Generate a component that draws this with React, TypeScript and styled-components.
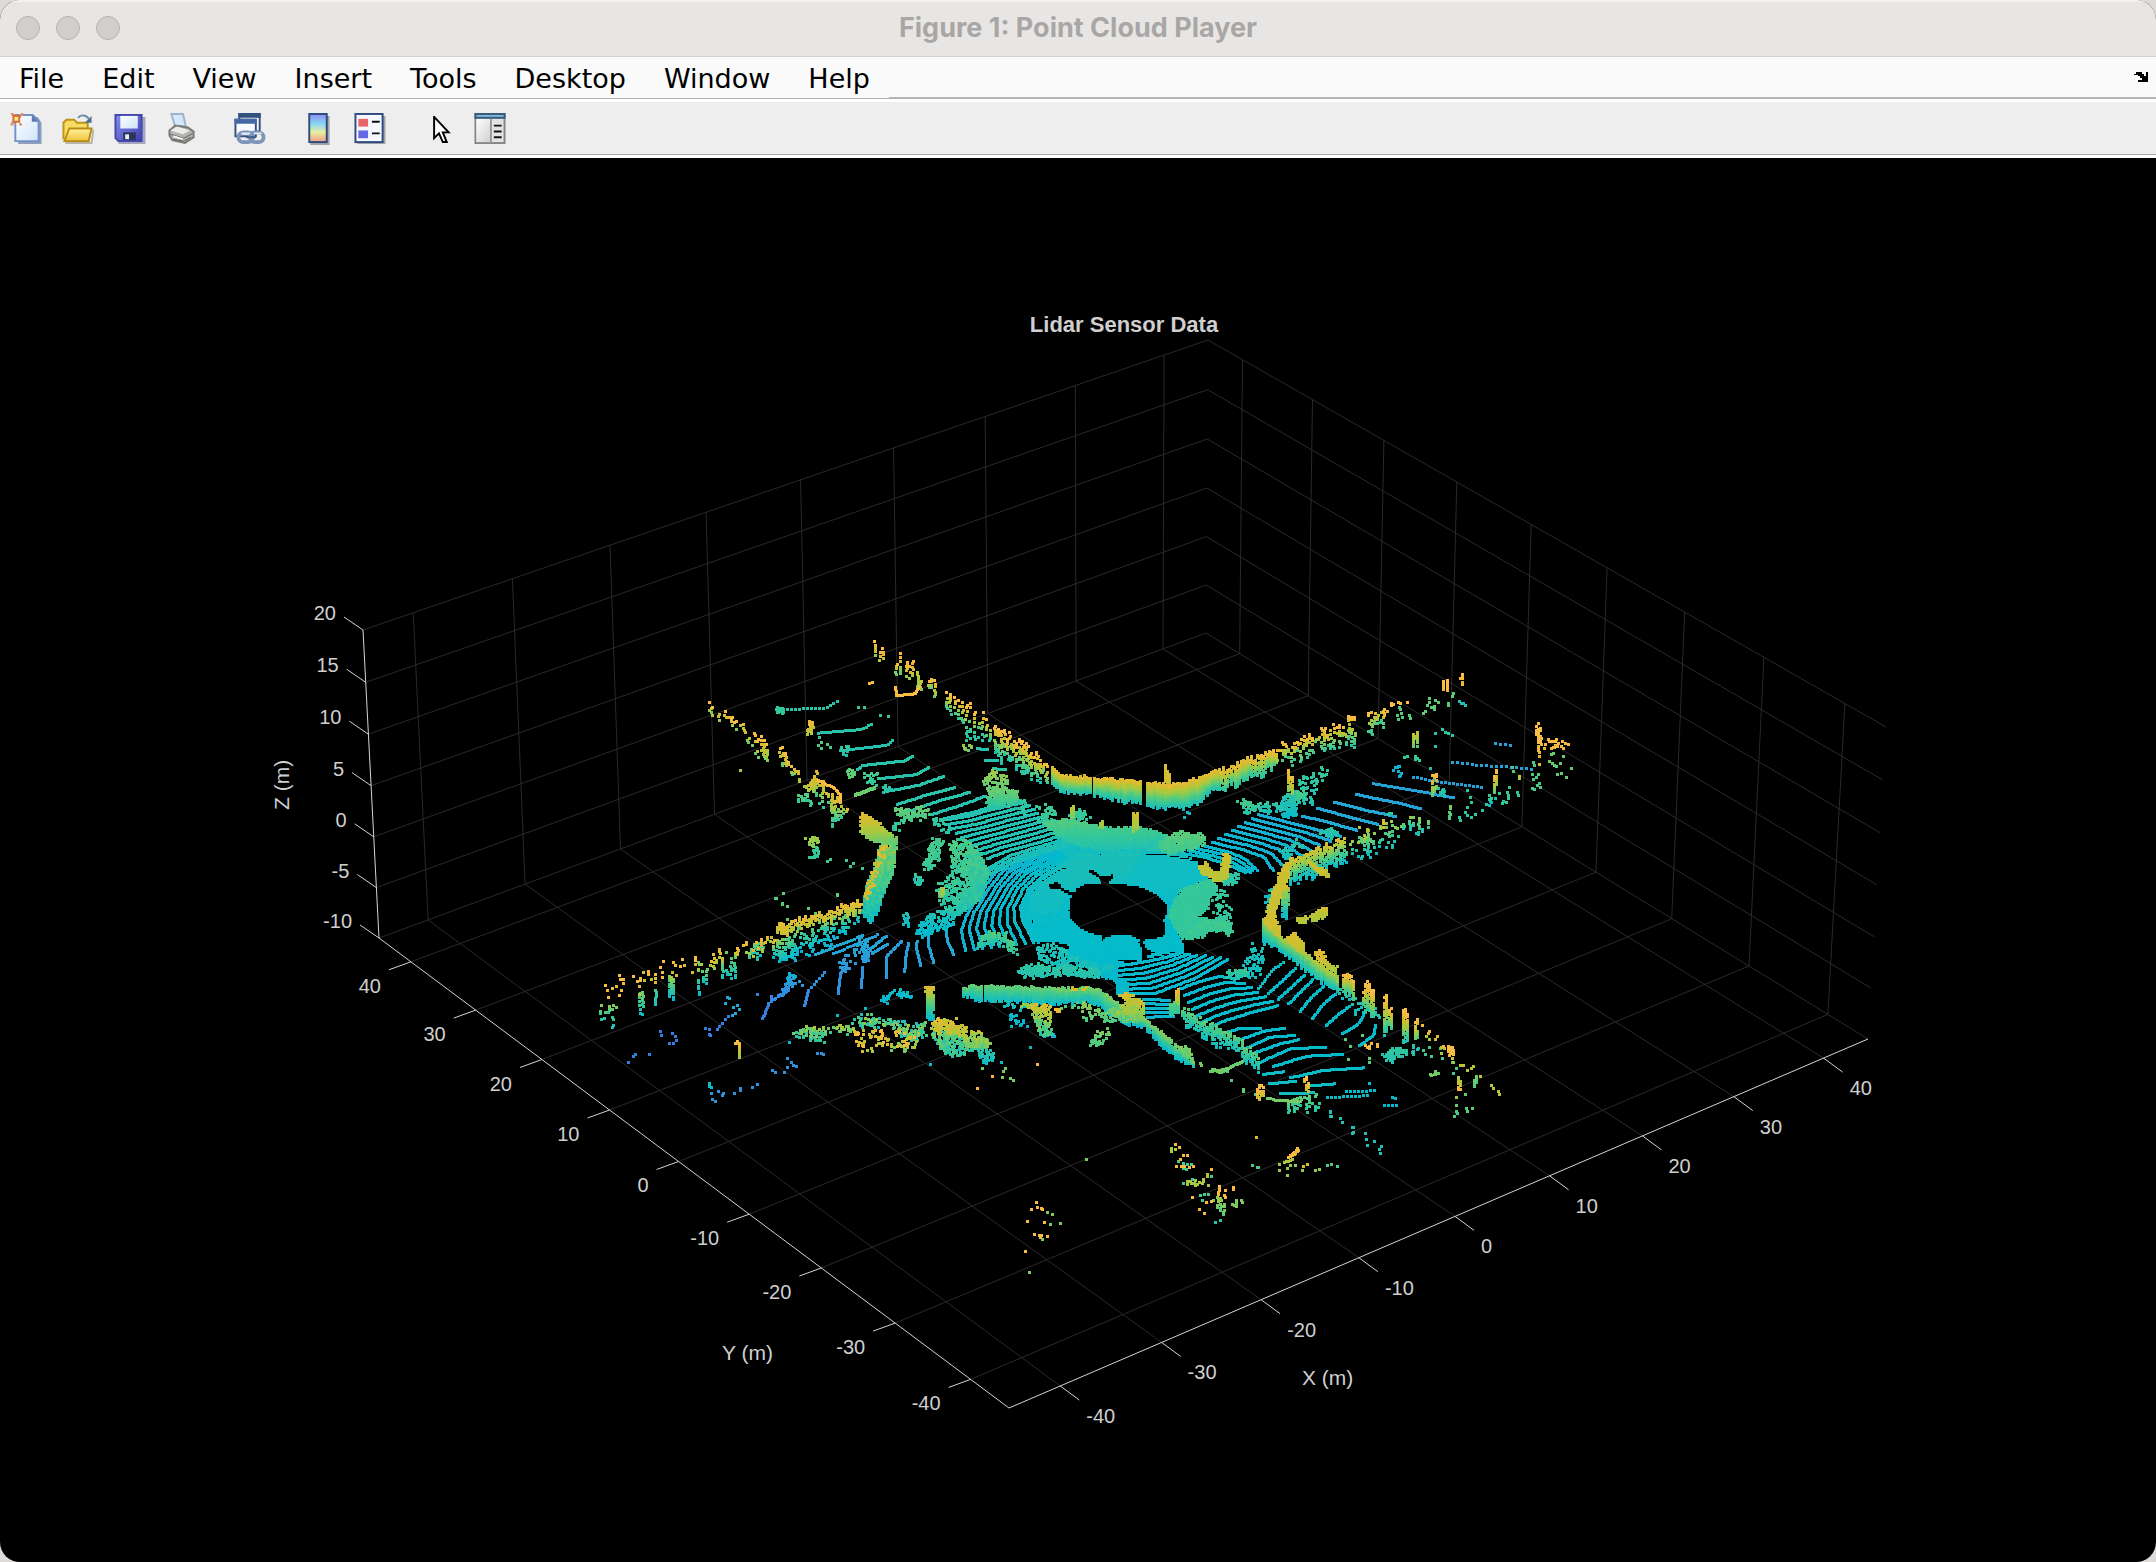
import React from 'react';
import styled, { createGlobalStyle } from 'styled-components';

/* ---------- page shell ---------- */

const GlobalStyle = createGlobalStyle`
  * { box-sizing: border-box; }
  body { margin: 0; background: #dcdbd9; }
`;

const Window = styled.main`
  display: flex;
  flex-direction: column;
  min-height: 100vh;
  overflow: hidden;
  border-radius: 20px;
  background: #000;
`;

const TitleBar = styled.header`
  display: grid;
  grid-template-columns: 1fr auto 1fr;
  align-items: center;
  height: 57px;
  padding: 0 16px 2px;
  background: #e8e6e4;
  border-top: 2px solid #f4f3f2;
  border-bottom: 1px solid #d0d0d0;
`;

const Lights = styled.div`
  display: flex;
  gap: 16px;
`;

const Light = styled.button`
  width: 24px;
  height: 24px;
  padding: 0;
  border: 1px solid #b4b3b1;
  border-radius: 50%;
  background: #d0cfcd;
`;

const WindowTitle = styled.h1`
  margin: 0;
  font: 700 27px/32px Inter, 'Liberation Sans', sans-serif;
  color: #a9a7a6;
`;

const MenuRow = styled.nav`
  display: flex;
  align-items: stretch;
  height: 45px;
  background: #fafafa;
  border-bottom: 3px solid #fff;
`;

const MenuList = styled.ul`
  display: flex;
  margin: 0;
  padding: 0;
  list-style: none;
  border-bottom: 1px solid #b2b2b2;
`;

const MenuButton = styled.button`
  height: 41px;
  padding: 2px 19px 0;
  border: 0;
  background: none;
  font: 400 27px/38px 'DejaVu Sans', sans-serif;
  color: #000;
`;

const MenuFill = styled.div`
  flex: 1;
  display: flex;
  justify-content: flex-end;
  align-items: center;
  padding-right: 8px;
  border-bottom: 2px solid #b4b4b4;
`;

const DockButton = styled.button`
  display: flex;
  padding: 0;
  border: 0;
  background: none;
`;

const Toolbar = styled.div`
  display: flex;
  align-items: center;
  gap: 36px;
  height: 56px;
  padding: 0 10px;
  background: #eee;
  border-bottom: 3px solid #fff;
  box-shadow: inset 0 -1px 0 #a8a8a8;
`;

const ToolGroup = styled.div`
  display: flex;
  gap: 20px;
`;

const ToolButton = styled.button`
  display: flex;
  width: 32px;
  height: 32px;
  padding: 0;
  border: 0;
  background: none;
`;

const Plot = styled.svg`
  display: block;
  width: 100%;
  height: auto;
`;

const TickLabel = styled.text`
  font: 400 20px 'Liberation Sans', Arial, sans-serif;
  fill: #cfcfcf;
`;

const AxisLabel = styled.text`
  font: 400 21px 'Liberation Sans', Arial, sans-serif;
  fill: #cfcfcf;
`;

const PlotTitle = styled.text`
  font: 700 22px 'Liberation Sans', Arial, sans-serif;
  fill: #cfcfcf;
`;

/* ---------- toolbar icons ---------- */

const icons: Record<string, React.ReactNode> = {
  'New Figure': (
    <>
      <path d="M8 4h20l4 6v22H8z" fill="#8f9fbb" />
      <path d="M5 2h18l6 6v21H5z" fill="url(#paper)" stroke="#6f93c8" strokeWidth="2" />
      <path d="M22 2v7h7z" fill="#5f78ad" />
      <path d="M0 0h2v2h2v2h6V2h2V0M0 12h2v-2h2M12 12h-2v-2" stroke="#e58a5c" strokeWidth="2" fill="none" />
      <rect x="2" y="2" width="8" height="8" fill="#d86e36" />
      <rect x="4" y="4" width="4" height="4" fill="#ffe680" />
    </>
  ),
  'Open File': (
    <>
      <path d="M3 31h27l2-14" stroke="#b9b5aa" strokeWidth="2" fill="none" />
      <path d="M1 27V10l3-3h8l3 3h11v6" fill="#f7dd65" stroke="#bd9414" strokeWidth="2" />
      <path d="M16 5c3-4 9-3 11 1" stroke="#6e8ba8" strokeWidth="2" fill="none" />
      <path d="M30 3v7h-7z" fill="#4e7094" />
      <path d="M2 29l5-13h23l-3 13z" fill="url(#folder)" stroke="#b98e10" strokeWidth="2" />
    </>
  ),
  'Save Figure': (
    <>
      <path d="M4 4h28v28H4z" fill="#a5a8bd" />
      <path d="M1 2h27v27H4l-3-3z" fill="url(#disk)" stroke="#4247ac" strokeWidth="2" />
      <rect x="6" y="3" width="18" height="13" fill="url(#paper)" />
      <rect x="9" y="20" width="13" height="8" fill="#2c3457" />
      <rect x="11" y="22" width="4" height="5" fill="#e7ebf5" />
    </>
  ),
  'Print Figure': (
    <>
      <path d="M5 1h12l3 13H9z" fill="#d5e7fb" stroke="#9eb4cd" strokeWidth="2" />
      <path d="M3 18l6-5 13 2 6 4v6l-9 6-13-3-3-5z" fill="#b4b4b2" stroke="#7a7a78" strokeWidth="2" />
      <path d="M4 18l7-4 13 4-7 4z" fill="#ececea" />
      <path d="M4 22l14 4 9-5M7 27l11 2 7-4" stroke="#5c5c5a" strokeWidth="1" fill="none" />
      <path d="M7 24l10 3" stroke="#f0f0ee" strokeWidth="2" />
    </>
  ),
  'Link Plot': (
    <>
      <path d="M5 1h21v18H5z" fill="#f2f6fd" stroke="#34507f" strokeWidth="2" />
      <path d="M4 0h23v5H4z" fill="#34507f" />
      <path d="M1 7h21v17H1z" fill="#f7faff" stroke="#34507f" strokeWidth="2" />
      <path d="M0 6h23v5H0z" fill="#4468a5" />
      <g fill="none">
        <rect x="4" y="20" width="15" height="10" rx="5" stroke="#7c95b8" strokeWidth="4" />
        <rect x="16" y="20" width="14" height="10" rx="5" stroke="#7c95b8" strokeWidth="4" />
        <path d="M7 21h9M20 21h8" stroke="#dfe9f6" strokeWidth="2" />
        <path d="M12 25h10" stroke="#3e5b8b" strokeWidth="2" />
      </g>
    </>
  ),
  'Insert Colorbar': (
    <>
      <rect x="8" y="3" width="20" height="30" fill="#a4a6ab" />
      <rect x="7" y="1" width="18" height="29" fill="url(#bar)" stroke="#2f4a7c" strokeWidth="2" />
    </>
  ),
  'Insert Legend': (
    <>
      <rect x="3" y="3" width="29" height="29" fill="#a4a6ab" />
      <rect x="1" y="1" width="28" height="29" fill="#f5f8ff" stroke="#2f4a7c" strokeWidth="2" />
      <rect x="4" y="6" width="10" height="8" fill="#e86466" />
      <rect x="4" y="18" width="10" height="8" fill="#6568e6" />
      <path d="M18 9h8M18 21h8" stroke="#111" strokeWidth="2" />
    </>
  ),
  'Edit Plot': (
    <path d="M12 3v23l5-5 4 9h4l-4-10h6L12 4" fill="#fff" stroke="#000" strokeWidth="2" />
  ),
  'Open Property Inspector': (
    <>
      <rect x="1" y="1" width="30" height="30" fill="#e2e2e2" stroke="#858585" strokeWidth="2" />
      <rect x="2" y="6" width="15" height="24" fill="url(#pane)" />
      <rect x="0" y="0" width="32" height="6" fill="#365a7c" />
      <rect x="2" y="2" width="28" height="2" fill="#7fb6d8" />
      <path d="M17 6v24" stroke="#9a9a9a" strokeWidth="2" />
      <path d="M20 13h8M20 19h8M20 25h8" stroke="#111" strokeWidth="2" />
    </>
  ),
};

const toolGroups = [
  ['New Figure', 'Open File', 'Save Figure', 'Print Figure'],
  ['Link Plot'],
  ['Insert Colorbar', 'Insert Legend'],
  ['Edit Plot', 'Open Property Inspector'],
];

const IconDefs = () => (
  <defs>
    <linearGradient id="paper" x1="0" y1="0" x2="1" y2="1">
      <stop offset="0" stopColor="#fff" />
      <stop offset="1" stopColor="#cfe3fa" />
    </linearGradient>
    <linearGradient id="folder" x1="0" y1="0" x2="0" y2="1">
      <stop offset="0" stopColor="#fff2a0" />
      <stop offset="1" stopColor="#f0c23a" />
    </linearGradient>
    <linearGradient id="disk" x1="0" y1="0" x2="1" y2="1">
      <stop offset="0" stopColor="#8a8ff0" />
      <stop offset="1" stopColor="#3c3fae" />
    </linearGradient>
    <linearGradient id="bar" x1="0" y1="0" x2="0" y2="1">
      <stop offset="0" stopColor="#8e8cf0" />
      <stop offset="0.35" stopColor="#86d8f4" />
      <stop offset="0.65" stopColor="#e9f0a0" />
      <stop offset="1" stopColor="#f29a88" />
    </linearGradient>
    <linearGradient id="pane" x1="0" y1="0" x2="1" y2="1">
      <stop offset="0" stopColor="#fff" />
      <stop offset="1" stopColor="#cfcfcf" />
    </linearGradient>
  </defs>
);

/* ---------- axes geometry ---------- */

type Pt = [number, number];

/** Projective map from the unit square to a quad given as (0,0) (1,0) (1,1) (0,1). */
const quadMap = ([a, b, c, d]: Pt[]) => {
  const sx = a[0] - b[0] + c[0] - d[0];
  const sy = a[1] - b[1] + c[1] - d[1];
  const dx1 = b[0] - c[0], dx2 = d[0] - c[0];
  const dy1 = b[1] - c[1], dy2 = d[1] - c[1];
  const det = dx1 * dy2 - dx2 * dy1;
  const g = (sx * dy2 - dx2 * sy) / det;
  const h = (dx1 * sy - sx * dy1) / det;
  return (u: number, v: number): Pt => {
    const w = g * u + h * v + 1;
    return [
      ((b[0] - a[0] + g * b[0]) * u + (d[0] - a[0] + h * d[0]) * v + a[0]) / w,
      ((b[1] - a[1] + g * b[1]) * u + (d[1] - a[1] + h * d[1]) * v + a[1]) / w,
    ];
  };
};

const front: Pt = [1009, 1408];
const right: Pt = [1868, 1039];
const back: Pt = [1206, 633];
const left: Pt = [379, 938];
const leftTop: Pt = [363, 630];
const backTop: Pt = [1208, 340];
const rightTop: Pt = [1886, 727];

const floor = quadMap([front, right, back, left]);
const leftWall = quadMap([left, back, backTop, leftTop]);
const rightWall = quadMap([right, back, backTop, rightTop]);

const ticksXY = [-40, -30, -20, -10, 0, 10, 20, 30, 40];
const ticksZ = [-10, -5, 0, 5, 10, 15, 20];
const uXY = (v: number) => (v + 45) / 90;
const uZ = (v: number) => (v + 10) / 30;

const seg = (a: Pt, b: Pt) =>
  `M${a[0].toFixed(1)} ${a[1].toFixed(1)}L${b[0].toFixed(1)} ${b[1].toFixed(1)}`;

const gridPath = [
  ...ticksXY.flatMap((v) => {
    const u = uXY(v);
    return [
      seg(floor(u, 0), floor(u, 1)),
      seg(floor(0, u), floor(1, u)),
      seg(leftWall(u, 0), leftWall(u, 1)),
      seg(rightWall(u, 0), rightWall(u, 1)),
    ];
  }),
  ...ticksZ.flatMap((v) => [
    seg(leftWall(0, uZ(v)), leftWall(1, uZ(v))),
    seg(rightWall(0, uZ(v)), rightWall(1, uZ(v))),
  ]),
].join('');

const shift = (p: Pt, dx: number, dy: number): Pt => [p[0] + dx, p[1] + dy];

const axisPath = [
  seg(front, right),
  seg(front, left),
  seg(left, leftTop),
  ...ticksXY.map((v) => seg(floor(uXY(v), 0), shift(floor(uXY(v), 0), 19, 14))),
  ...ticksXY.map((v) => seg(floor(0, uXY(v)), shift(floor(0, uXY(v)), -22, 8))),
  ...ticksZ.map((v) => seg(leftWall(0, uZ(v)), shift(leftWall(0, uZ(v)), -19, -13))),
].join('');

/* ---------- point cloud ---------- */

let seed = 20117;
const rnd = () => {
  seed = (seed * 1664525 + 1013904223) % 4294967296;
  return seed / 4294967296;
};

/** Coarse noise that makes sparse foliage gather in small clumps. */
const clump = (x: number, y: number) => {
  const v = Math.sin(Math.floor(x / 6) * 12.9898 + Math.floor(y / 5) * 78.233) * 43758.5453;
  return v - Math.floor(v);
};

const ramp: [number, number, number, number][] = [
  [0, 62, 108, 222],
  [0.15, 46, 146, 222],
  [0.28, 34, 168, 212],
  [0.37, 2, 186, 205],
  [0.46, 34, 192, 178],
  [0.54, 54, 200, 150],
  [0.64, 104, 204, 112],
  [0.74, 168, 202, 62],
  [0.84, 214, 188, 46],
  [0.93, 248, 186, 62],
  [1, 250, 194, 72],
];

const heightColor = (t: number) => {
  let i = 1;
  while (i < ramp.length - 1 && ramp[i][0] < t) i++;
  const [t0, r0, g0, b0] = ramp[i - 1];
  const [t1, r1, g1, b1] = ramp[i];
  const k = Math.min(1, Math.max(0, (t - t0) / (t1 - t0)));
  const m = (p: number, q: number) => Math.round(p + (q - p) * k);
  return `rgb(${m(r0, r1)},${m(g0, g1)},${m(b0, b1)})`;
};

type Dot = { x: number; y: number; t: number };
let dots: Dot[] = [];

const parse = (s: string): Pt[] => s.split(' ').map((p) => p.split(',').map(Number) as Pt);

const yAt = (line: Pt[], x: number) => {
  for (let i = 1; i < line.length; i++) {
    const [x0, y0] = line[i - 1];
    const [x1, y1] = line[i];
    if (x <= x1) return y0 + ((y1 - y0) * (x - x0)) / (x1 - x0 || 1);
  }
  return line[line.length - 1][1];
};

const inside = (poly: Pt[], x: number, y: number) => {
  let hit = false;
  for (let i = 0, j = poly.length - 1; i < poly.length; j = i++) {
    const [xi, yi] = poly[i];
    const [xj, yj] = poly[j];
    if (yi > y !== yj > y && x < ((xj - xi) * (y - yi)) / (yj - yi) + xi) hit = !hit;
  }
  return hit;
};

/** Each scan patch has its own origin and is measured in thirds of a pixel. */
const patch = (ox: number, oy: number) => {
  const pts = (s: string): Pt[] => parse(s).map(([x, y]) => [ox + x / 3, oy + y / 3]);
  const put = (x: number, y: number, t: number) =>
    dots.push({ x: Math.round(x) - 1, y: Math.round(y) - 1, t });

  const trace = (p: Pt[], t: number, step: number) => {
    let carry = 0;
    for (let i = 1; i < p.length; i++) {
      const [x0, y0] = p[i - 1];
      const [x1, y1] = p[i];
      const len = Math.hypot(x1 - x0, y1 - y0);
      for (; carry < len; carry += step) {
        put(x0 + ((x1 - x0) * carry) / len, y0 + ((y1 - y0) * carry) / len, t + (rnd() - 0.5) * 0.02);
      }
      carry -= len;
    }
  };

  return {
    /** Vertical returns hanging between a top and a bottom edge. */
    wall(top: string, bottom: string, t0: number, t1: number, keep = 1, gap = 2) {
      const a = pts(top);
      const b = pts(bottom);
      const rag = keep < 0.9 ? (gap > 2 ? 10 : 7) : 3;
      for (let x = a[0][0]; x <= a[a.length - 1][0]; x += gap) {
        const y0 = yAt(a, x) + (rnd() - 0.5) * rag;
        const y1 = yAt(b, x) + (rnd() - 0.5) * rag * 1.4;
        for (let y = y0; y <= y1; y += 2) {
          if (rnd() < keep) {
            const f = (y - y0) / Math.max(1, y1 - y0);
            const j = keep < 0.9 && gap > 2 ? (rnd() - 0.5) * 1.6 : 0;
            put(x + j, y, t0 + (t1 - t0) * f + (rnd() - 0.5) * 0.05);
          }
        }
      }
    },
    /** Filled region; below full density it breaks into clumps. */
    fill(outline: string, t0: number, t1: number, keep = 1, noise = 0.04) {
      const p = pts(outline);
      const xs = p.map((q) => q[0]);
      const ys = p.map((q) => q[1]);
      const y0 = Math.min(...ys), y1 = Math.max(...ys);
      for (let y = y0; y <= y1; y += 2) {
        for (let x = Math.min(...xs); x <= Math.max(...xs); x += 2) {
          const e = keep < 1 ? 4 : 2;
          const chance = keep < 0.9 ? keep + (clump(x, y) - 0.5) * 0.7 * keep : keep;
          if (!inside(p, x + (rnd() - 0.5) * e, y + (rnd() - 0.5) * e) || rnd() > chance) continue;
          const f = (y - y0) / (y1 - y0 || 1);
          const j = keep < 0.9 ? (rnd() - 0.5) * 2 : 0;
          put(x + j, y + j, t0 + (t1 - t0) * f + (rnd() - 0.5) * noise);
        }
      }
    },
    line(s: string, t: number, step = 2) {
      trace(pts(s), t, step);
    },
    /** Scan rings interpolated between two guide curves. */
    rings(from: string, to: string, n: number, t0: number, t1 = t0) {
      const a = pts(from);
      const b = pts(to);
      for (let i = 0; i < n; i++) {
        const k = i / (n - 1);
        trace(a.map(([x, y], j) => [x + (b[j][0] - x) * k, y + (b[j][1] - y) * k]), t0 + (t1 - t0) * k, 2);
      }
    },
    at(s: string, t: number) {
      pts(s).forEach(([x, y]) => put(x, y, t));
    },
    clear(outline: string) {
      const p = pts(outline);
      dots = dots.filter((d) => !inside(p, d.x + 1, d.y + 1));
    },
    scratch(s: string) {
      const p = pts(s);
      dots = dots.filter(
        (d) => d.x < p[0][0] || d.x > p[p.length - 1][0] || Math.abs(yAt(p, d.x) - d.y - 1) > 0.9,
      );
    },
  };
};

const w = patch(620, 620);
const s = patch(580, 880);
const c = patch(980, 720);
const e = patch(1180, 660);
const b = patch(960, 1120);

/* ground around the sensor */
c.fill('165,668 130,610 120,560 145,505 185,468 240,430 270,412 240,395 230,345 300,330 460,330 560,370 600,395 640,420 665,445 690,470 600,510 570,580 600,650 612,700 540,708 470,722 410,728 415,790 350,762 330,740 255,712 268,675 210,660', 0.42, 0.36, 1, 0.015);
c.fill('150,520 240,430 300,400 480,390 440,480 280,500 230,560 140,600', 0.44, 0.4, 1, 0.02);
c.fill('185,310 250,298 330,315 400,325 460,320 540,335 575,355 540,392 470,385 380,392 300,380 240,355', 0.6, 0.45);
c.fill('160,262 215,255 235,300 300,262 330,305 260,318 180,312', 0.54, 0.5, 0.55);
c.fill('535,375 560,350 595,333 675,345 678,368 640,385 560,402', 0.62, 0.54, 0.97);
c.fill('565,590 580,545 610,505 690,475 718,505 690,530 685,570 650,590 700,600 745,580 735,600 755,640 715,625 660,645 625,660 605,655', 0.52, 0.52);
c.fill('690,560 700,520 735,500 750,560 748,640 715,610', 0.52, 0.52, 0.35);
c.fill('610,640 680,600 745,605 755,640 700,630 650,660', 0.56, 0.52, 0.75);

/* hollow under the sensor */
c.clear('264,570 270,530 290,500 320,487 370,486 430,490 490,500 530,520 558,550 562,575 552,600 558,640 545,652 480,662 440,642 400,645 375,655 365,662 362,648 330,640 295,622 270,595');
c.clear('285,535 250,518 230,505 205,506 203,492 225,483 243,488 244,500 285,516');
c.clear('362,490 350,472 322,456 324,450 345,450 362,464 378,466 402,456 400,474 384,490');
c.clear('470,662 485,656 500,685 528,698 500,706 500,722 482,716 484,690');
c.scratch('190,462 240,430 300,410 360,400');
c.scratch('485,399 560,404 640,420 700,440');
c.scratch('410,722 500,715 590,692');
c.scratch('150,520 185,480 230,450 260,440');

/* rings on the west side */
w.rings('960,600 1040,588 1120,566 1215,545', '1100,715 1160,692 1250,668 1340,640', 10, 0.46, 0.45);
w.rings('1035,990 1022,930 1040,880 1092,800 1130,750 1230,702 1330,668 1400,645', '1240,965 1206,900 1200,860 1225,805 1265,768 1320,733 1380,710 1440,698', 9, 0.32, 0.4);
w.rings('1108,740 1170,705 1250,680 1340,655', '1108,762 1180,725 1260,698 1360,668', 3, 0.44);
w.rings('1250,860 1252,890 1262,920 1262,920', '1225,830 1220,870 1238,930 1250,950', 2, 0.38);
w.clear('1228,860 1234,858 1238,910 1232,905');
w.clear('1254,862 1257,862 1260,905 1256,900');
w.line('960,597 1060,575 1150,548 1200,540', 0.47);
w.line('930,583 1020,555 1100,525', 0.47);
w.line('865,573 960,540 1050,515', 0.48);
w.line('830,552 930,520 1007,500', 0.48);
w.line('790,515 900,493 973,467', 0.48);
w.line('775,475 890,462 928,440', 0.48);
w.line('712,448 725,435 850,422 880,404', 0.49);
w.line('680,388 800,375 820,357', 0.48, 3);
w.line('595,338 725,327 760,307', 0.49, 3);
w.line('500,267 620,262 660,237', 0.5, 4);
w.line('1070,385 1105,387', 0.48);
w.line('1095,420 1135,420', 0.48);
w.line('1120,445 1160,447', 0.5);
w.line('705,525 765,503', 0.64);
w.line('705,522 765,500', 0.64);

/* north-west arm, facades and shrubs */
w.wall('765,78 800,78', '765,120 800,120', 1, 0.65, 0.4, 4);
w.wall('828,115 842,115', '828,160 842,165', 0.95, 0.6, 0.7, 4);
w.wall('860,130 884,130', '860,185 884,150', 0.98, 0.7, 0.6, 3);
w.line('826,200 828,225 885,220 898,195', 0.95);
w.wall('893,170 908,185', '893,205 908,212', 0.8, 0.66, 0.8, 3);
w.wall('925,178 945,178', '922,215 945,235', 0.98, 0.62, 0.7, 3);
w.at('748,188 757,187', 0.95);
w.at('715,262 733,262 780,285 805,288', 0.55);
w.wall('978,218 1035,245 1085,278 1110,312', '978,270 1035,320 1085,355 1110,355', 0.98, 0.48, 0.5, 4);
w.wall('1125,322 1165,345 1245,398 1285,448', '1125,410 1165,425 1245,480 1288,488', 0.97, 0.44, 0.72, 3);
w.fill('1085,470 1120,450 1165,462 1175,495 1140,500 1110,520', 0.72, 0.6, 0.5);
w.fill('1100,510 1150,500 1195,515 1195,545 1150,560 1100,555', 0.66, 0.5, 0.88);
w.fill('1200,535 1216,535 1218,575 1205,580', 0.52, 0.5, 0.7);
w.fill('1030,350 1090,345 1095,360 1035,356', 0.5, 0.5, 0.6);
w.fill('1025,382 1055,378 1055,390 1030,395', 0.7, 0.64, 0.7);
w.wall('270,240 350,298 410,345 445,385', '280,290 350,335 400,385 445,425', 0.97, 0.62, 0.38, 3);
w.wall('432,378 447,385', '432,412 447,425', 0.84, 0.66, 0.7, 3);
w.wall('478,382 530,450', '480,442 535,490', 0.96, 0.6, 0.48, 3);
w.wall('535,460 590,465 620,520 690,580', '540,545 590,530 620,560 690,605', 0.88, 0.52, 0.35, 3);
w.fill('560,495 575,480 592,462 580,510 560,512', 0.9, 0.74, 0.85);
w.wall('635,535 665,550', '635,605 665,600', 0.85, 0.5, 0.75, 3);
w.line('595,480 640,503 660,523 660,550', 0.93);
w.at('360,450', 0.72);
w.fill('468,256 495,258 495,275 475,290 468,275', 0.52, 0.52, 0.6);
w.fill('560,305 578,298 582,340 568,348 560,330', 0.93, 0.72, 0.85);
w.fill('585,345 600,345 600,350 585,352', 0.55, 0.55);
w.fill('585,370 628,366 628,385 590,385', 0.6, 0.56, 0.3);
w.fill('655,390 680,375 690,395 670,410', 0.52, 0.46, 0.8);
w.fill('672,455 705,450 705,470 675,475', 0.62, 0.62, 0.4);
w.fill('735,462 775,455 780,480 755,500 740,485', 0.58, 0.5, 0.5);
w.fill('788,490 815,512 795,520', 0.5, 0.46, 0.9);
w.fill('818,572 890,555 930,570 925,590 870,600 820,632 815,620 850,598', 0.64, 0.5, 0.7);
w.fill('935,592 975,595 1000,635 985,640 940,615', 0.52, 0.48, 0.5);
w.fill('720,578 740,580 828,650 828,685 790,672 752,662 722,635', 0.88, 0.58);
w.fill('778,672 828,680 824,740 800,800 775,870 752,908 740,895 726,880 735,800 760,745', 0.66, 0.4, 1, 0.16);
w.fill('780,672 800,672 765,770 738,850 730,830 745,780', 0.84, 0.82, 0.6);
w.fill('555,655 590,648 600,665 575,682', 0.74, 0.66, 0.6);
w.fill('575,685 598,680 590,705 562,722', 0.56, 0.5, 0.7);
w.at('622,722 630,718 678,720 690,737 700,730 725,743 652,825 465,833 490,820 485,850 500,858', 0.56);
w.fill('905,725 940,655 972,658 948,740 910,748', 0.56, 0.54, 0.75);
w.fill('985,665 1035,652 1075,690 1100,750 1080,835 1000,885 960,850 950,795 1000,760 985,700', 0.58, 0.48, 0.6, 0.08);
w.fill('1040,672 1085,705 1108,760 1085,830 1020,885 1000,880 1050,800', 0.52, 0.43);
w.fill('955,795 970,800 965,835 955,830', 0.74, 0.68, 0.8);
w.fill('885,765 905,755 902,795 888,790', 0.5, 0.48, 0.7);
w.fill('850,872 866,880 862,915 850,915', 0.46, 0.4, 0.85);
w.fill('885,925 920,885 960,875 1010,880 1000,915 940,940 890,958', 0.44, 0.34, 0.62);
w.fill('1065,985 1085,940 1150,935 1160,970 1100,975', 0.58, 0.42, 0.75, 0.12);
w.fill('1150,955 1185,960 1192,1008 1165,990', 0.6, 0.48, 0.85);
w.fill('1240,985 1300,965 1350,1000 1420,1030 1490,1040 1440,1060 1330,1045 1260,1020', 0.46, 0.42, 0.6);
w.fill('1195,1050 1215,1030 1330,1040 1440,1048 1430,1072 1340,1065 1210,1068', 0.5, 0.46, 0.8);

/* south-west arm */
w.line('1000,1002 980,960 978,925', 0.28);
w.line('940,1025 925,980 925,940', 0.26);
w.line('900,1035 888,985 890,960', 0.24);
w.line('853,1052 857,1000 865,965', 0.22);
w.line('798,1070 797,1010 843,962', 0.2);
w.line('723,1100 727,1035', 0.16);
w.line('653,1120 660,1060 680,1035', 0.15);
w.line('553,1155 565,1110', 0.12);
w.line('565,1110 615,1055', 0.15, 4);
w.line('427,1195 445,1150', 0.06);
w.line('445,1150 475,1125 510,1105', 0.12, 3);
w.line('585,1003 735,942', 0.28, 3);
w.line('640,1000 780,940', 0.24, 3);
w.line('750,985 800,945', 0.24);
w.line('755,1000 805,968', 0.22);
w.fill('715,955 735,958 758,1000 745,1025 715,1020 735,995', 0.28, 0.18, 0.8);
w.fill('655,1020 700,985 735,965 740,1010 690,1030 670,1050', 0.26, 0.18, 0.35);
w.fill('500,1050 520,1060 542,1090 520,1102 505,1095', 0.36, 0.16, 0.75);
w.fill('450,1135 505,1095 525,1100 470,1140', 0.16, 0.1, 0.5);
s.wall('590,135 650,120 740,92 845,60', '590,165 650,145 740,122 845,88', 0.88, 0.72, 0.72, 2);
s.wall('625,160 700,140 840,100', '625,240 700,215 840,140', 0.6, 0.28, 0.42, 3);
s.wall('580,175 640,150', '585,225 640,235', 0.7, 0.36, 0.5, 3);
s.wall('70,320 180,275 270,250 350,225', '70,370 180,325 270,290 350,260', 0.97, 0.8, 0.14, 4);
s.wall('355,245 470,205 580,170', '355,270 470,225 580,195', 0.9, 0.72, 0.45, 3);
s.wall('62,370 118,370', '62,415 118,432', 0.68, 0.44, 0.4, 4);
s.wall('178,330 187,330', '178,400 187,400', 0.66, 0.42, 0.7, 3);
s.wall('226,335 234,335', '226,372 234,372', 0.56, 0.45, 0.8, 3);
s.wall('266,280 282,285', '262,365 282,362', 0.72, 0.36, 0.8, 2);
s.wall('355,260 385,255', '355,330 385,308', 0.68, 0.4, 0.5, 4);
s.wall('428,235 470,220', '432,285 470,270', 0.64, 0.42, 0.5, 4);
s.wall('505,205 550,190', '505,250 550,235', 0.64, 0.38, 0.6, 3);
s.fill('590,140 620,135 625,165 600,165', 0.86, 0.82);
s.at('588,55 610,40 605,72 622,78 770,43 685,85 705,100 620,118', 0.62);
s.at('125,298 128,308 122,330 118,345 160,288 172,302 205,272 240,262 245,275 245,290 280,245 305,237 300,258 345,230 75,315 80,330 85,350', 0.95);
s.at('442,350 448,355 435,368 460,382 470,375 478,388 465,400 455,405', 0.28);
s.at('445,408 435,418 425,428 418,438 412,446 375,445 388,448 388,462 390,466 532,342', 0.08);
s.at('240,453 243,465 275,458 285,468 288,480 280,490 268,490 165,522 160,528 208,523 145,546', 0.07);
s.wall('466,488 480,488', '468,500 480,540', 0.96, 0.7, 0.85, 2);
s.at('388,608 388,618 392,622', 0.4);
s.at('392,640 415,632 428,638 425,646 395,658 405,663 463,640 480,630 480,625 517,620 530,612 575,570 585,575 612,575 622,560 620,535 632,545 640,555 648,558', 0.15);
s.at('712,518 722,520 730,522', 0.14);
s.at('855,383 772,405 627,487', 0.38);
s.fill('890,362 930,335 960,330 995,345 990,352 950,345 900,372', 0.42, 0.3, 0.5);
s.fill('968,335 995,345 990,352 970,345', 0.33, 0.33);
s.fill('1036,316 1062,322 1060,420 1040,420', 0.88, 0.34);
s.fill('640,462 675,430 720,445 800,425 830,450 800,458 740,460 720,490 700,480 655,468', 0.72, 0.5, 0.55, 0.2);
s.fill('810,430 850,405 930,420 1000,430 1040,420 1040,470 990,490 930,440 850,440', 0.55, 0.6, 0.6, 0.35);
s.fill('820,450 1000,445 1000,500 900,500 840,530', 0.9, 0.8, 0.22, 0.2);
s.fill('1055,418 1120,415 1165,445 1150,470 1060,455', 0.84, 0.72, 0.7, 0.15);
s.fill('1050,450 1120,455 1170,480 1145,525 1110,535 1070,490', 0.62, 0.46, 0.72, 0.2);
s.fill('1150,470 1190,450 1230,480 1230,500 1190,510 1150,490', 0.78, 0.58, 0.75, 0.15);
s.fill('1165,500 1225,500 1245,535 1215,550', 0.5, 0.4, 0.6);
s.fill('905,500 1010,475 1010,500 960,520', 0.7, 0.64, 0.25);
s.at('1275,565 1270,573 1265,590 1290,595 1298,600 1205,565', 0.65);
s.at('1370,552 1235,588 1190,625', 0.92);
s.at('1050,552 1350,502 1262,545', 0.38);

/* south wall and trees below it */
w.wall('1030,1108 1055,1098 1190,1100 1290,1105', '1030,1125 1075,1140 1200,1145 1290,1150', 0.62, 0.38);
w.wall('1296,1105 1410,1104 1440,1112 1470,1130', '1296,1150 1400,1148 1450,1165 1470,1190', 0.64, 0.37);
w.fill('1355,1100 1400,1100 1400,1106 1355,1106', 0.82, 0.82);
w.clear('1086,1098 1090,1098 1090,1150 1086,1150');
c.wall('375,825 440,865 500,905 560,952 610,990 640,1022', '380,880 440,910 500,928 550,985 600,1022 640,1038', 0.66, 0.36, 0.95);
c.wall('410,785 440,785', '410,822 440,822', 0.36, 0.36);
c.fill('420,825 440,820 485,840 495,885 480,905 430,905 400,880 440,850', 0.84, 0.62, 0.9, 0.1);
c.fill('145,855 200,848 215,870 210,925 220,950 185,945 165,910', 0.84, 0.5, 0.62, 0.16);
c.fill('110,850 190,850 205,865 140,868', 0.7, 0.74, 0.5);
c.fill('225,862 240,866 236,880 226,878', 0.9, 0.86);
c.fill('300,855 335,850 342,888 315,900', 0.7, 0.6, 0.6);
c.fill('340,870 400,865 420,900 380,905', 0.66, 0.58, 0.6);
c.fill('315,975 350,935 392,925 392,955 330,985', 0.68, 0.56, 0.55);
c.fill('30,840 150,850 110,870', 0.46, 0.4, 0.3);
c.fill('80,880 150,875 150,920 90,920', 0.36, 0.36, 0.22);
c.fill('185,935 222,930 222,950 190,950', 0.3, 0.3, 0.45);
c.fill('240,855 300,848 300,865 250,868', 0.6, 0.6, 0.5);

/* south-east arm */
c.rings('410,737 470,728 540,715 605,697', '412,820 520,820 640,775 745,715', 7, 0.36, 0.36);
c.rings('490,836 570,840', '500,890 580,888', 5, 0.34);
e.rings('0,985 60,962 120,948 175,955', '70,1108 130,1082 200,1060 298,1035', 7, 0.36, 0.38);
e.line('110,1125 180,1103 240,1103', 0.37);
e.line('150,1148 250,1112 315,1103', 0.37);
e.line('200,1162 270,1130 345,1125', 0.37);
e.line('215,1180 300,1150 357,1137', 0.37);
e.line('235,1207 330,1165 437,1160', 0.38);
e.line('280,1218 380,1187 487,1182', 0.38);
e.line('250,1242 312,1234', 0.4);
e.line('330,1252 430,1230 553,1222', 0.39);
e.line('268,1270 350,1262', 0.4);
e.line('385,1277 465,1270', 0.4);
e.line('300,1300 405,1297', 0.42, 3);
e.line('440,1312 570,1305', 0.4, 4);
e.line('497,1293 587,1291', 0.38, 4);
e.line('612,1336 657,1335', 0.36, 4);
e.at('635,1312 645,1315 567,1268', 0.38);
e.fill('130,955 150,930 190,925 205,945 180,950 160,960', 0.54, 0.44, 0.85);
e.fill('190,910 220,850 255,845 260,900 215,975 205,960', 0.44, 0.4, 0.25);
e.line('235,985 275,930 310,905', 0.4, 3);
e.line('265,998 345,925', 0.38);
e.line('293,1016 375,942', 0.38);
e.line('325,1030 400,955', 0.38);
e.line('360,1052 392,1012 430,977', 0.38);
e.line('395,1075 430,1030 465,1000', 0.38);
e.line('437,1095 470,1065 510,1035', 0.38);
e.line('487,1120 530,1095 550,1065', 0.38);
e.line('537,1155 580,1125 585,1090', 0.38);
e.wall('5,1045 80,1085 180,1145 235,1190', '5,1085 80,1132 180,1185 240,1235', 0.62, 0.4, 0.72, 2);
c.fill('565,855 590,840 600,850 600,880 565,882', 0.62, 0.5);
c.wall('589,808 598,808', '589,850 598,850', 0.9, 0.7);
c.wall('600,975 680,1028', '600,1005 690,1040', 0.68, 0.6, 0.4, 3);
c.line('690,1052 715,1050 745,1042 790,1022', 0.64);
c.line('695,1046 720,1056 750,1040 785,1024', 0.64);
c.wall('740,1065 830,1118', '745,1078 830,1132', 0.64, 0.62, 0.35, 4);
c.wall('830,1100 848,1108', '830,1130 848,1130', 0.96, 0.8, 0.8, 2);
c.line('860,1133 890,1140 960,1143', 0.66, 3);
c.wall('925,1135 1020,1125', '925,1168 1020,1168', 0.62, 0.48, 0.55, 3);
c.wall('972,1080 986,1080', '976,1098 982,1130', 0.95, 0.8, 0.7, 2);
c.at('1050,1175 1052,1187 1080,1193 1085,1205 1120,1220 1115,1238', 0.48);
e.at('450,1352 450,1368 480,1375 485,1385 517,1400 520,1417 515,1418 555,1420 558,1436 562,1455 582,1442 602,1457 598,1468 600,1478', 0.46);

e.wall('250,780 300,832 370,868 400,902 475,955', '245,838 300,872 380,935 440,975 475,995', 0.74, 0.38);
e.fill('315,835 340,812 355,830 372,850 370,885 340,860', 0.86, 0.76);
e.fill('398,880 405,865 422,868 440,900 470,928 468,960 430,930', 0.9, 0.66, 0.9);
e.wall('488,950 500,930 522,968', '488,990 500,1000 522,1012', 0.94, 0.5, 0.8, 2);
e.wall('548,990 562,970 582,995', '548,1040 562,1062 585,1060', 0.97, 0.48, 0.72, 2);
e.wall('470,975 600,1060', '475,1010 600,1098', 0.5, 0.4, 0.35, 3);
e.wall('612,1012 622,1015', '620,1125 632,1128', 0.97, 0.44, 0.85, 2);
e.wall('628,1040 638,1030', '628,1100 638,1100', 0.95, 0.5, 0.7, 2);
e.wall('668,1055 680,1055', '662,1165 672,1150', 0.98, 0.45, 0.85, 2);
e.wall('705,1083 714,1083', '700,1150 712,1130', 0.95, 0.55, 0.7, 2);
e.wall('728,1095 830,1180', '728,1125 830,1200', 0.96, 0.72, 0.3, 3);
e.fill('793,1145 825,1160 822,1185 800,1185', 0.95, 0.92, 0.85);
e.fill('600,1190 650,1158 672,1165 690,1180 650,1190 632,1212 618,1195', 0.52, 0.46, 0.9);
e.fill('675,1170 710,1150 715,1165 690,1185', 0.5, 0.45, 0.5);
e.at('730,1170 735,1182 752,1187 748,1160 780,1165 785,1195 815,1205 820,1240 828,1225', 0.56);
e.at('495,1138 510,1158 545,1125 567,1195 567,1205 503,1198', 0.62);
e.at('555,1155 560,1162 568,1158 572,1150 568,1165 592,1158 590,1152', 0.93);
e.fill('735,1250 750,1235 775,1238 770,1245 745,1245', 0.66, 0.64, 0.7);
e.at('840,1215 850,1215 862,1230 872,1225 878,1218 900,1247 932,1275 938,1285 955,1292 958,1303', 0.78);
e.wall('882,1245 890,1245', '882,1280 890,1270', 0.64, 0.6, 0.8, 2);
e.wall('834,1250 842,1250', '834,1300 842,1302', 0.7, 0.96, 0.6, 2);
e.wall('820,1320 840,1320', '820,1362 840,1358', 0.7, 0.58, 0.5, 3);
e.at('858,1345 860,1354 875,1345 855,1303', 0.62);

/* east corner */
e.fill('165,418 205,422 240,435 235,455 185,460 180,430', 0.58, 0.48, 0.7);
e.fill('235,435 300,430 310,460 240,460', 0.5, 0.42, 0.4);
e.fill('310,400 345,395 350,470 320,472 298,455', 0.5, 0.38, 0.72);
e.wall('324,340 338,345', '324,400 330,400', 0.92, 0.66, 0.85, 2);
e.fill('340,395 370,350 435,320 445,340 400,400 400,430 350,430', 0.54, 0.46, 0.28);
e.fill('345,395 380,390 375,420 350,425', 0.58, 0.5, 0.6);
e.fill('420,520 440,500 470,510 465,530 425,535', 0.5, 0.44, 0.55);
e.fill('325,550 345,538 370,560 340,570', 0.52, 0.46, 0.75);
e.fill('298,568 325,565 335,592 310,600', 0.46, 0.4, 0.9);
e.rings('235,462 320,485 400,505 480,527', '95,546 190,568 250,590 280,632', 8, 0.3, 0.34);
e.rings('70,556 150,576 195,596 232,632', '0,578 80,592 140,612 200,638', 4, 0.36, 0.38);
e.line('367,467 450,487 530,510', 0.28);
e.line('410,443 500,468 593,492', 0.27);
e.line('463,425 560,450 645,468', 0.27, 2);
e.line('527,402 640,425 725,445', 0.25, 2);
e.line('580,370 700,390 820,412', 0.24, 3);
e.line('700,350 800,368 905,380', 0.23, 4);
e.line('815,305 900,315 1000,320 1062,327', 0.24, 5);
e.line('945,250 995,255', 0.24, 5);
e.fill('640,318 650,312 660,335 690,350 655,345', 0.36, 0.3, 0.8);
e.wall('330,600 400,572 495,535', '330,668 400,648 495,605', 0.82, 0.36, 0.72, 2);
e.wall('500,560 560,525 610,495 690,478 745,485', '500,595 560,580 610,565 690,515 745,515', 0.72, 0.4, 0.32, 3);
e.wall('535,515 570,510', '535,555 570,560', 0.78, 0.5, 0.6, 3);
e.fill('316,603 334,612 322,665 306,690 290,742 270,780 258,755 278,690 296,640', 0.82, 0.8);
e.fill('300,672 325,675 325,720 318,775 305,768', 0.82, 0.36, 1, 0.12);
e.fill('258,700 280,685 285,735 268,745 258,730', 0.42, 0.38, 0.7);
e.fill('250,775 285,745 290,785 302,800 302,835 262,800', 0.84, 0.8);
e.fill('352,775 382,762 382,782 355,795', 0.82, 0.74);
e.fill('390,762 440,737 442,765 394,783', 0.84, 0.72);
e.fill('383,600 415,620 445,632 445,652 415,640 390,620', 0.82, 0.78);
c.fill('656,438 680,428 694,452 712,460 724,440 728,403 748,403 744,462 722,490 700,484 686,470 662,462', 0.82, 0.76);
c.fill('740,455 775,460 765,485 725,500 735,475', 0.5, 0.5, 0.8);
c.wall('458,282 474,282', '458,328 474,325', 0.82, 0.7);
c.wall('360,305 370,305', '360,330 370,330', 0.74, 0.66);
c.wall('273,262 284,262', '273,290 284,288', 0.76, 0.66);

/* north wall */
c.wall('217,145 250,166 336,172', '222,200 250,215 336,226', 0.86, 0.42);
c.wall('342,174 400,178 484,185', '342,225 400,238 478,248', 0.86, 0.43);
c.wall('501,187 560,196 610,190 650,175 720,148', '501,258 560,262 620,262 660,245 690,215 720,205', 0.86, 0.42);
c.wall('555,138 572,170', '555,190 572,200', 0.84, 0.82);
c.at('612,290 620,275 628,278', 0.4);
c.wall('722,148 800,120 880,92', '725,205 800,178 880,142', 0.88, 0.48, 0.88, 2);
e.wall('280,270 370,232 440,205 525,172', '280,318 370,285 440,252 530,258', 0.95, 0.5, 0.56, 3);
e.wall('565,145 622,152', '565,225 622,190', 0.97, 0.5, 0.55, 3);
e.at('632,135 632,128 655,125 680,125 640,133 660,128', 0.96);
e.at('650,165 655,178 662,160 665,172 688,165 690,175 660,148 658,140', 0.6);
e.wall('788,62 806,62', '788,98 806,95', 0.97, 0.92, 0.9, 4);
e.wall('834,50 850,50', '838,60 846,92', 0.97, 0.9, 0.55, 2);
e.at('730,158 735,152 742,135 748,113 752,142 762,148 762,138 773,125 765,120 805,128 803,135 820,100 815,108 748,125', 0.62);
e.at('838,123 842,130 850,128 855,135 765,257 750,325 765,220', 0.46);
e.line('785,208 800,218 818,226', 0.5, 4);
e.wall('698,225 710,215', '698,268 704,250', 0.8, 0.6, 0.8, 2);
e.at('672,292 680,288 705,288 712,295 718,300 705,297', 0.52);

/* far east returns */
e.wall('1068,188 1085,200', '1068,235 1092,240', 0.97, 0.95, 0.6, 2);
e.wall('1075,235 1100,240', '1078,292 1098,265', 0.95, 0.84, 0.5, 3);
e.fill('1100,240 1140,232 1170,255 1170,290 1150,260 1110,262', 0.96, 0.86, 0.45);
e.at('1108,302 1115,310 1122,315 1128,318 1140,308 1130,342 1142,338 1157,352 1172,325 1112,282 1120,280 1150,287', 0.64);
e.at('1058,305 1062,315 1055,342 1075,342 1068,352 1058,358 1078,368 1070,375 1055,385 1062,388 1080,380', 0.58);
e.wall('1018,315 1026,315', '1010,358 1022,345', 0.92, 0.76, 0.6, 2);
e.wall('942,335 952,338', '938,410 948,395', 0.97, 0.6, 0.7, 2);
e.wall('756,345 770,345', '754,415 762,400', 0.97, 0.6, 0.75, 2);
e.fill('765,390 790,382 805,410 780,408', 0.5, 0.44, 0.4);
e.wall('808,430 816,430', '808,468 816,470', 0.66, 0.56, 0.8, 3);
e.at('840,480 838,472 855,455 862,465 872,470 862,442 885,462 905,450 870,412 872,425 862,390', 0.5);
e.wall('918,415 945,405', '922,460 942,440', 0.56, 0.36, 0.4, 3);
e.at('980,395 985,405 988,380 985,415 978,425 968,422 1015,405 1012,395 958,400 965,430', 0.52);
e.at('995,320 1000,332', 0.6);
e.at('608,480 610,490 608,502', 0.88);
e.fill('605,455 625,448 640,462 612,465', 0.5, 0.5, 0.7);

/* southern stragglers */
b.at('229,245 214,266 230,261 243,264 247,268 201,304 251,307 222,342 238,344 241,348 244,346 260,348 240,352 194,394', 0.95);
b.at('262,277 276,282 271,312 301,309 247,356 208,455 379,118', 0.68);
b.at('646,73 656,80 668,106 682,106 660,117 649,139 662,139 672,139 686,140 699,139 753,148 697,232 716,268 732,278 753,243 738,246', 0.93);
b.at('632,85 632,92 644,88 741,162 741,168 729,176 729,184 744,196 705,180 716,186 682,184 690,182 692,190 702,190 712,193 725,188 680,192 705,196', 0.74);
b.at('655,123 670,130 680,133 692,133 670,145 677,148 754,169 696,176 668,189 733,222 745,222 720,226 727,239', 0.56);
b.at('766,305 780,301', 0.48);
b.wall('776,212 822,198', '776,216 822,212', 0.96, 0.95, 0.75, 3);
b.at('793,225 795,230', 0.95);
b.wall('772,238 808,240', '772,266 808,266', 0.72, 0.62, 0.6, 3);
b.at('815,253 822,254 828,240 828,248 828,257 843,240 845,246 760,240', 0.68);
b.line('972,126 995,118', 0.76);
b.line('985,110 1000,100 1012,82', 0.93);
b.line('990,106 1008,98 1016,84', 0.9);
b.at('889,50 1028,137 1040,133', 0.86);
b.at('956,133 958,150 981,145 981,166 990,135 1004,136 1026,151 1066,151 1076,146', 0.7);
b.at('877,136 890,142 893,140 1102,135 1113,132 1132,138', 0.58);

const LEVELS = 56;
const cloud = Array.from({ length: LEVELS }, (_, i) => ({ color: heightColor(i / (LEVELS - 1)), d: '' }));
dots.forEach(({ x, y, t }) => {
  const i = Math.min(LEVELS - 1, Math.max(0, Math.round(t * (LEVELS - 1))));
  cloud[i].d += `M${x} ${y}h3v3h-3z`;
});

const PointCloud = () => (
  <g shapeRendering="crispEdges">
    {cloud.filter((l) => l.d).map((l) => (
      <path key={l.color} d={l.d} fill={l.color} />
    ))}
  </g>
);

const Axes = () => (
  <g>
    <path d={gridPath} stroke="#2a2a2a" strokeWidth="1" fill="none" />
    <path d={axisPath} stroke="#d4d4d4" strokeWidth="1" fill="none" />
    {ticksXY.map((v) => {
      const [x, y] = floor(uXY(v), 0);
      return <TickLabel key={`x${v}`} x={x + 26} y={y + 37}>{v}</TickLabel>;
    })}
    {ticksXY.map((v) => {
      const [x, y] = floor(0, uXY(v));
      return <TickLabel key={`y${v}`} x={x - 30} y={y + 31} textAnchor="end">{v}</TickLabel>;
    })}
    {ticksZ.map((v) => {
      const [x, y] = leftWall(0, uZ(v));
      return <TickLabel key={`z${v}`} x={x - 27} y={y - 10} textAnchor="end">{v}</TickLabel>;
    })}
    <AxisLabel x="1302" y="1385">X (m)</AxisLabel>
    <AxisLabel x="722" y="1360">Y (m)</AxisLabel>
    <AxisLabel transform="translate(289 810) rotate(-90)">Z (m)</AxisLabel>
    <PlotTitle x="1124" y="332" textAnchor="middle">Lidar Sensor Data</PlotTitle>
  </g>
);

const menus = ['File', 'Edit', 'View', 'Insert', 'Tools', 'Desktop', 'Window', 'Help'];

export default function App() {
  return (
    <>
      <GlobalStyle />
      <Window>
        <TitleBar>
          <Lights>
            {['Close', 'Minimize', 'Zoom'].map((n) => (
              <Light key={n} type="button" aria-label={n} />
            ))}
          </Lights>
          <WindowTitle>Figure 1: Point Cloud Player</WindowTitle>
        </TitleBar>
        <MenuRow>
          <MenuList>
            {menus.map((m) => (
              <li key={m}>
                <MenuButton type="button">{m}</MenuButton>
              </li>
            ))}
          </MenuList>
          <MenuFill>
            <DockButton type="button" aria-label="Dock figure">
              <svg width="14" height="10" viewBox="0 0 14 10" shapeRendering="crispEdges">
                <path d="M0 2h2V0h6v2h2v2h2V0h2v10H4V8h4V6H6V4H4V3H0z" fill="#000" />
              </svg>
            </DockButton>
          </MenuFill>
        </MenuRow>
        <Toolbar>
          {toolGroups.map((group) => (
            <ToolGroup key={group[0]}>
              {group.map((name) => (
                <ToolButton key={name} type="button" aria-label={name}>
                  <svg width="32" height="32" viewBox="0 0 32 33">
                    <IconDefs />
                    {icons[name]}
                  </svg>
                </ToolButton>
              ))}
            </ToolGroup>
          ))}
        </Toolbar>
        <Plot viewBox="0 158 2156 1404" role="img" aria-label="Lidar Sensor Data">
          <Axes />
          <PointCloud />
        </Plot>
      </Window>
    </>
  );
}
